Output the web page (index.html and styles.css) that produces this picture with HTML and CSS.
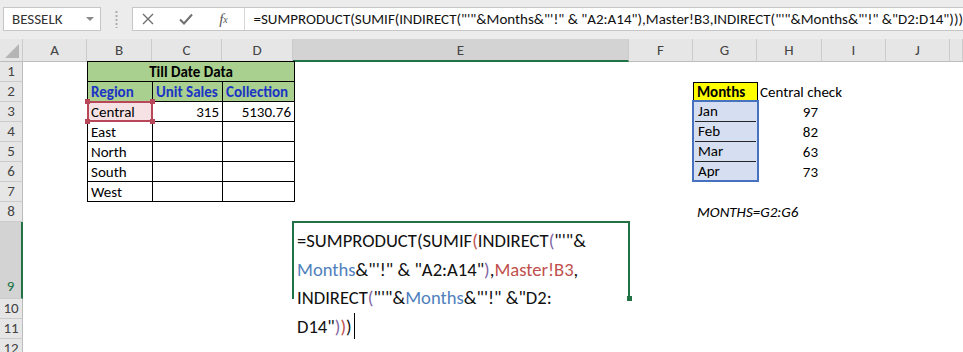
FILE: index.html
```html
<!DOCTYPE html>
<html lang="en">
<head>
	<meta charset="UTF-8">
	<title>SUMPRODUCT INDIRECT - Master</title>
	<link rel="stylesheet" href="styles.css">
</head>
<body>
	<!-- name box + formula bar -->
	<div class="toolbar">
		<div class="namebox">BESSELK<span class="drop"></span></div>
		<div class="grip"></div>
		<div class="fbar">
			<div class="btns">
				<span class="btn">
					<svg width="12" height="12" viewBox="0 0 12 12"><path d="M1 1L11 11M11 1L1 11" stroke="#6f6f6f" stroke-width="1.4" fill="none"/></svg>
				</span>
				<span class="btn">
					<svg width="14" height="12" viewBox="0 0 14 12"><path d="M1 6.5L5 10.5L13 1.5" stroke="#6f6f6f" stroke-width="2" fill="none"/></svg>
				</span>
				<span class="btn fx">f<sub>x</sub></span>
			</div>
			<div class="formula">=SUMPRODUCT(SUMIF(INDIRECT("'"&amp;Months&amp;"'!" &amp; "A2:A14"),Master!B3,INDIRECT("'"&amp;Months&amp;"'!" &amp;"D2:D14")))</div>
		</div>
	</div>

	<div class="sheet">
		<div class="hd corner">
			<svg width="14" height="14" viewBox="0 0 14 14"><polygon points="14,0 14,14 0,14" fill="#b5b5b5"/></svg>
		</div>
		<div class="hd">A</div>
		<div class="hd">B</div>
		<div class="hd">C</div>
		<div class="hd">D</div>
		<div class="hd sel">E</div>
		<div class="hd">F</div>
		<div class="hd">G</div>
		<div class="hd">H</div>
		<div class="hd">I</div>
		<div class="hd">J</div>
		<div class="hd"></div>

		<div class="rh">1</div>
		<div class="rh">2</div>
		<div class="rh">3</div>
		<div class="rh">4</div>
		<div class="rh">5</div>
		<div class="rh">6</div>
		<div class="rh">7</div>
		<div class="rh">8</div>
		<div class="rh sel">9</div>
		<div class="rh">10</div>
		<div class="rh">11</div>
		<div class="rh">12</div>

		<!-- B1:D7 -->
		<table class="data">
			<colgroup><col class="w-b"><col class="w-c"><col class="w-d"></colgroup>
			<tr class="green"><td class="title" colspan="3">Till Date Data</td></tr>
			<tr class="green hdr"><td>Region</td><td>Unit Sales</td><td>Collection</td></tr>
			<tr>
				<td class="ref">Central
					<span class="refbox"><i class="tl"></i><i class="tr"></i><i class="bl"></i><i class="br"></i></span>
				</td>
				<td class="num">315</td>
				<td class="num">5130.76</td>
			</tr>
			<tr><td>East</td><td></td><td></td></tr>
			<tr><td>North</td><td></td><td></td></tr>
			<tr><td>South</td><td></td><td></td></tr>
			<tr><td>West</td><td></td><td></td></tr>
		</table>

		<!-- G2:H6 -->
		<div class="months">
			<div class="mhead">Months</div>
			<div class="mtitle">Central check</div>
			<div class="mlist">
				<div class="m">Jan</div>
				<div class="m">Feb</div>
				<div class="m">Mar</div>
				<div class="m">Apr</div>
			</div>
			<div class="mvals">
				<div>97</div>
				<div>82</div>
				<div>63</div>
				<div>73</div>
			</div>
		</div>

		<div class="note">MONTHS=G2:G6</div>

		<!-- E9 in edit mode -->
		<div class="editor">
			<div class="ln">=SUMPRODUCT(SUMIF<span class="c-red">(</span>INDIRECT<span class="c-pur">(</span>"'"&amp;</div>
			<div class="ln"><span class="c-blue">Months</span>&amp;"'!" &amp; "A2:A14"<span class="c-pur">)</span>,<span class="c-red">Master!B3</span>,</div>
			<div class="ln">INDIRECT<span class="c-pur">(</span>"'"&amp;<span class="c-blue">Months</span>&amp;"'!" &amp;"D2:</div>
			<div class="ln">D14"<span class="c-pur">)</span><span class="c-red">)</span>)<span class="caret"></span></div>
		</div>
	</div>
</body>
</html>
```

FILE: styles.css
```css
*{
	margin: 0;
	padding: 0;
	box-sizing: border-box;
}
body{
	width: 963px;
	height: 352px;
	overflow: hidden;
	background: #fff;
	font-family: Carlito, Calibri, Lato, "Noto Sans", sans-serif;
	font-size: 15px;
	color: #000;
}

/* ---- toolbar ---- */
.toolbar{
	height: 39px;
	background: #ececec;
	display: flex;
	padding: 7px 0 8px 3px;
}
.namebox{
	width: 101px;
	background: #fff;
	border: 1px solid #c6c6c6;
	display: flex;
	align-items: center;
	justify-content: space-between;
	padding: 0 6px 0 8px;
	color: #333;
}
.drop{
	width: 0;
	height: 0;
	border-left: 4px solid transparent;
	border-right: 4px solid transparent;
	border-top: 4px solid #8a8a8a;
}
.grip{
	width: 32px;
	background: radial-gradient(circle, #a8a8a8 1px, transparent 1.2px) center 4px / 3px 4px repeat-y;
	margin: 3px 0;
}
.fbar{
	flex: 1;
	display: flex;
	background: #fff;
	border: 1px solid #c6c6c6;
	border-right: none;
}
.btns{
	width: 112px;
	display: flex;
	gap: 8px;
	align-items: center;
	border-right: 1px solid #d6d6d6;
}
.btn{
	width: 30px;
	display: flex;
	justify-content: center;
	align-items: center;
}
.fx{
	font-family: "Liberation Serif", serif;
	font-style: italic;
	font-size: 15px;
	color: #555;
}
.fx sub{
	font-size: 10px;
	vertical-align: -1px;
}
.formula{
	flex: 1;
	padding-left: 9px;
	white-space: nowrap;
	overflow: hidden;
	line-height: 22px;
	color: #111;
}

/* ---- sheet grid ---- */
.sheet{
	display: grid;
	grid-template-columns: 23px 64px 65px 70px 71px 336px 64px 64px 65px 64px 64px 1fr;
	grid-template-rows: 23px repeat(8, 20px) 77px repeat(3, 20px);
}
.hd{
	background: #e6e6e6;
	border-right: 1px solid #cbcbcb;
	border-bottom: 1px solid #bcbcbc;
	display: flex;
	align-items: center;
	justify-content: center;
	color: #444;
}
.hd.sel{
	background: #d3d3d3;
	border-bottom: 2px solid #217346;
}
.corner{
	align-items: flex-end;
	justify-content: flex-end;
	padding: 0 3px 3px 0;
}
.corner svg{
	display: block;
}
.rh{
	grid-column: 1;
	background: #e6e6e6;
	border-bottom: 1px solid #cbcbcb;
	border-right: 1px solid #bcbcbc;
	display: flex;
	align-items: flex-end;
	justify-content: center;
	line-height: 19px;
	color: #444;
}
.rh.sel{
	background: #d3d3d3;
	border-right: 2px solid #217346;
	color: #217346;
	padding-bottom: 2px;
}

/* ---- B1:D7 ---- */
.data{
	grid-column: 3 / 6;
	grid-row: 2 / 9;
	width: 207px;
	margin-top: -1px;
	border-collapse: collapse;
	table-layout: fixed;
	align-self: start;
}
.w-b{ width: 65px; }
.w-c{ width: 70px; }
.w-d{ width: 72px; }
.data td{
	height: 20px;
	border: 1px solid #000;
	padding: 0 3px;
	line-height: 18px;
	white-space: nowrap;
	overflow: hidden;
}
.green td{
	background: #a9d08e;
}
.title{
	font-weight: bold;
	text-align: center;
}
.hdr td{
	color: #1c34c6;
	font-weight: bold;
}
.data td.num{
	text-align: right;
}
.data td.ref{
	position: relative;
	overflow: visible;
	background: #f6e2e4;
}
.refbox{
	position: absolute;
	top: -1px;
	left: -1px;
	right: -1px;
	bottom: -1px;
	border: 2px solid #b8475a;
}
.refbox i{
	position: absolute;
	width: 5px;
	height: 5px;
	background: #b8475a;
}
.refbox .tl{ left: -4px; top: -4px; }
.refbox .tr{ right: -4px; top: -4px; }
.refbox .bl{ left: -4px; bottom: -4px; }
.refbox .br{ right: -4px; bottom: -4px; }

/* ---- G2:H6 ---- */
.months{
	grid-column: 8 / 10;
	grid-row: 3 / 8;
	display: grid;
	grid-template-columns: 64px 65px;
	grid-template-rows: repeat(5, 20px);
}
.mhead{
	background: #ffff00;
	border: 1px solid #000;
	border-bottom: none;
	width: 65px;
	font-weight: bold;
	padding-left: 3px;
	line-height: 18px;
}
.mtitle{
	padding-left: 3px;
	line-height: 20px;
	white-space: nowrap;
}
.mlist{
	grid-column: 1;
	grid-row: 2 / 6;
	margin: -2px -2px 0 -1px;
	border: 2px solid #4672c0;
	background: #d6dff1;
	display: flex;
	flex-direction: column;
}
.m{
	height: 20px;
	line-height: 19px;
	padding-left: 3px;
	border-bottom: 1px solid #262626;
	margin: 0 1px;
}
.m:last-child{
	border-bottom: none;
}
.mvals{
	grid-column: 2;
	grid-row: 2 / 6;
	text-align: right;
	padding-right: 4px;
	line-height: 20px;
}

.note{
	grid-column: 8 / 11;
	grid-row: 9;
	font-style: italic;
	padding-left: 4px;
	line-height: 20px;
	white-space: nowrap;
}

/* ---- E9 editing ---- */
.editor{
	grid-column: 6;
	grid-row: 10;
	position: relative;
	margin: -1px -1px 0 -1px;
	border: 2px solid #217346;
	border-bottom: none;
	padding: 4px 0 0 3px;
	font-size: 18.6px;
	line-height: 28.6px;
	color: #111;
	white-space: nowrap;
}
.editor::after{
	content: "";
	position: absolute;
	right: -4px;
	bottom: -2px;
	width: 5px;
	height: 5px;
	background: #217346;
}
.c-red{ color: #c0504d; }
.c-pur{ color: #8064a2; }
.c-blue{ color: #4f81bd; }
.caret{
	display: inline-block;
	width: 1px;
	height: 26px;
	background: #000;
	vertical-align: -6px;
	margin-left: 2px;
}
```
